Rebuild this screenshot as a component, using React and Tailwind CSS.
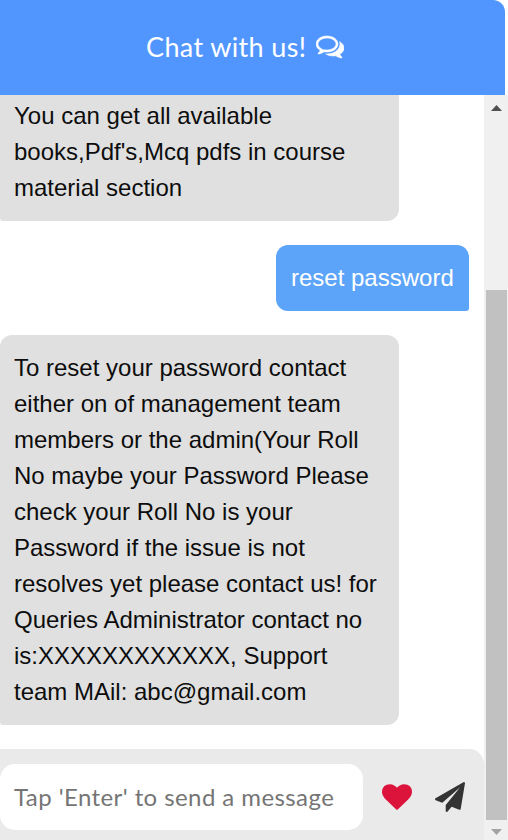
import React from "react";

function Glyph({ d, className }) {
  return (
    <svg viewBox="0 0 1792 1792" className={className} fill="currentColor" aria-hidden="true">
      <path transform="translate(0 1536) scale(1 -1)" d={d} />
    </svg>
  );
}

const COMMENTS =
  "M704 1152q-153 0 -286 -52t-211.5 -141t-78.5 -191q0 -82 53 -158t149 -132l97 -56l-35 -84q34 20 62 39l44 31l53 -10q78 -14 153 -14q153 0 286 52t211.5 141t78.5 191t-78.5 191t-211.5 141t-286 52zM704 1280q191 0 353.5 -68.5t256.5 -186.5t94 -257t-94 -257t-256.5 -186.5t-353.5 -68.5q-86 0 -176 16q-124 -88 -278 -128q-36 -9 -86 -16h-3q-11 0 -20.5 8t-11.5 21q-1 3 -1 6.5t0.5 6.5t2 6l2.5 5t3.5 5.5t4 5t4.5 5t4 4.5q5 6 23 25t26 29.5t22.5 29t25 38.5t20.5 44q-124 72 -195 177t-71 224q0 139 94 257t256.5 186.5t353.5 68.5zM1526 111q10 -24 20.5 -44t25 -38.5t22.5 -29t26 -29.5t23 -25q1 -1 4 -4.5t4.5 -5t4 -5t3.5 -5.5l2.5 -5t2 -6t0.5 -6.5t-1 -6.5q-3 -14 -13 -22t-22 -7q-50 7 -86 16q-154 40 -278 128q-90 -16 -176 -16q-271 0 -472 132q58 -4 88 -4q161 0 309 45t264 129q125 92 192 212t67 254q0 77 -23 152q129 -71 204 -178t75 -230q0 -120 -71 -224.5t-195 -176.5z";
const HEART =
  "M896 -128q-26 0 -44 18l-624 602q-10 8 -27.5 26t-55.5 65.5t-68 97.5t-53.5 121t-23.5 138q0 220 127 344t351 124q62 0 126.5 -21.5t120 -58t95.5 -68.5t76 -68q36 36 76 68t95.5 68.5t120 58t126.5 21.5q224 0 351 -124t127 -344q0 -221 -229 -450l-623 -600q-18 -18 -44 -18z";
const PLANE =
  "M1764 1525q33 -24 27 -64l-256 -1536q-5 -29 -32 -45q-14 -8 -31 -8q-11 0 -24 5l-453 185l-242 -295q-18 -23 -49 -23q-13 0 -22 4q-19 7 -30.5 23.5t-11.5 36.5v349l864 1059l-1069 -925l-395 162q-37 14 -40 55q-2 40 32 59l1664 960q15 9 32 9q20 0 36 -11z";

function BotMessage({ lines, className }) {
  return (
    <div className={`w-[399px] shrink-0 bg-[#e0e0e0] pl-[14px] text-[#0d0d0d] ${className}`}>
      {lines.map((line) => (
        <div key={line} className="whitespace-nowrap">{line}</div>
      ))}
    </div>
  );
}

export default function App() {
  return (
    <div className="flex h-[840px] w-[508px] flex-col overflow-hidden bg-white">
      <header className="flex h-[95px] w-[505px] shrink-0 items-center rounded-tr-[12px] bg-[#5196ff] pl-[146px] font-['Lato',sans-serif] text-[27px] text-white">
        <span className="w-[170px] whitespace-nowrap tracking-[0.35px]">Chat with us!</span>
        <Glyph d={COMMENTS} className="mb-[3px] size-[28px] stroke-current stroke-[36]" />
      </header>
      <div className="flex min-h-0 flex-1">
        <main className="flex w-[484px] flex-col">
          <div className="flex h-[654px] flex-col font-['Liberation_Sans',Arial,sans-serif] text-[24px] leading-[36px]">
            <BotMessage
              className="h-[126px] rounded-br-[12px] rounded-bl-[3px] pt-[3px]"
              lines={["You can get all available", "books,Pdf's,Mcq pdfs in course", "material section"]}
            />
            <div className="mt-[24px] mr-[15px] flex h-[66px] w-[193px] shrink-0 items-center self-end rounded-[12px] rounded-br-[3px] bg-[#5ca4fa] pl-[15px] whitespace-nowrap text-white">
              reset password
            </div>
            <BotMessage
              className="mt-[24px] h-[390px] rounded-[12px] rounded-bl-[3px] pt-[15px]"
              lines={[
                "To reset your password contact",
                "either on of management team",
                "members or the admin(Your Roll",
                "No maybe your Password Please",
                "check your Roll No is your",
                "Password if the issue is not",
                "resolves yet please contact us! for",
                "Queries Administrator contact no",
                "is:XXXXXXXXXXXX, Support",
                "team MAil: abc@gmail.com",
              ]}
            />
          </div>
          <footer className="flex h-[91px] items-start rounded-tr-[15px] bg-[#eaeaea] pt-[15px]">
            <div className="flex h-[66px] w-[363px] items-center rounded-[15px] bg-white pb-px pl-[14px] font-['Lato',sans-serif] text-[24px] tracking-[0.42px] whitespace-nowrap text-[#757575]">
              Tap 'Enter' to send a message
            </div>
            <Glyph d={HEART} className="mt-[18px] ml-[19px] size-[30px] text-[#dc143c]" />
            <Glyph d={PLANE} className="mt-[18px] ml-[23px] size-[30px] text-[#333]" />
          </footer>
        </main>
        <aside className="flex w-[24px] flex-col items-center bg-[#f0f0f0]">
          <svg viewBox="0 0 24 195" className="h-[195px] w-[24px]">
            <path d="M7 16L12.5 10L18 16Z" fill="#505050" />
          </svg>
          <div className="ml-px h-[530px] w-[21px] bg-[#c1c1c1]" />
          <svg viewBox="0 0 24 20" className="h-[20px] w-[24px]">
            <path d="M7 9L12.5 15L18 9Z" fill="#a3a3a3" />
          </svg>
        </aside>
      </div>
    </div>
  );
}
